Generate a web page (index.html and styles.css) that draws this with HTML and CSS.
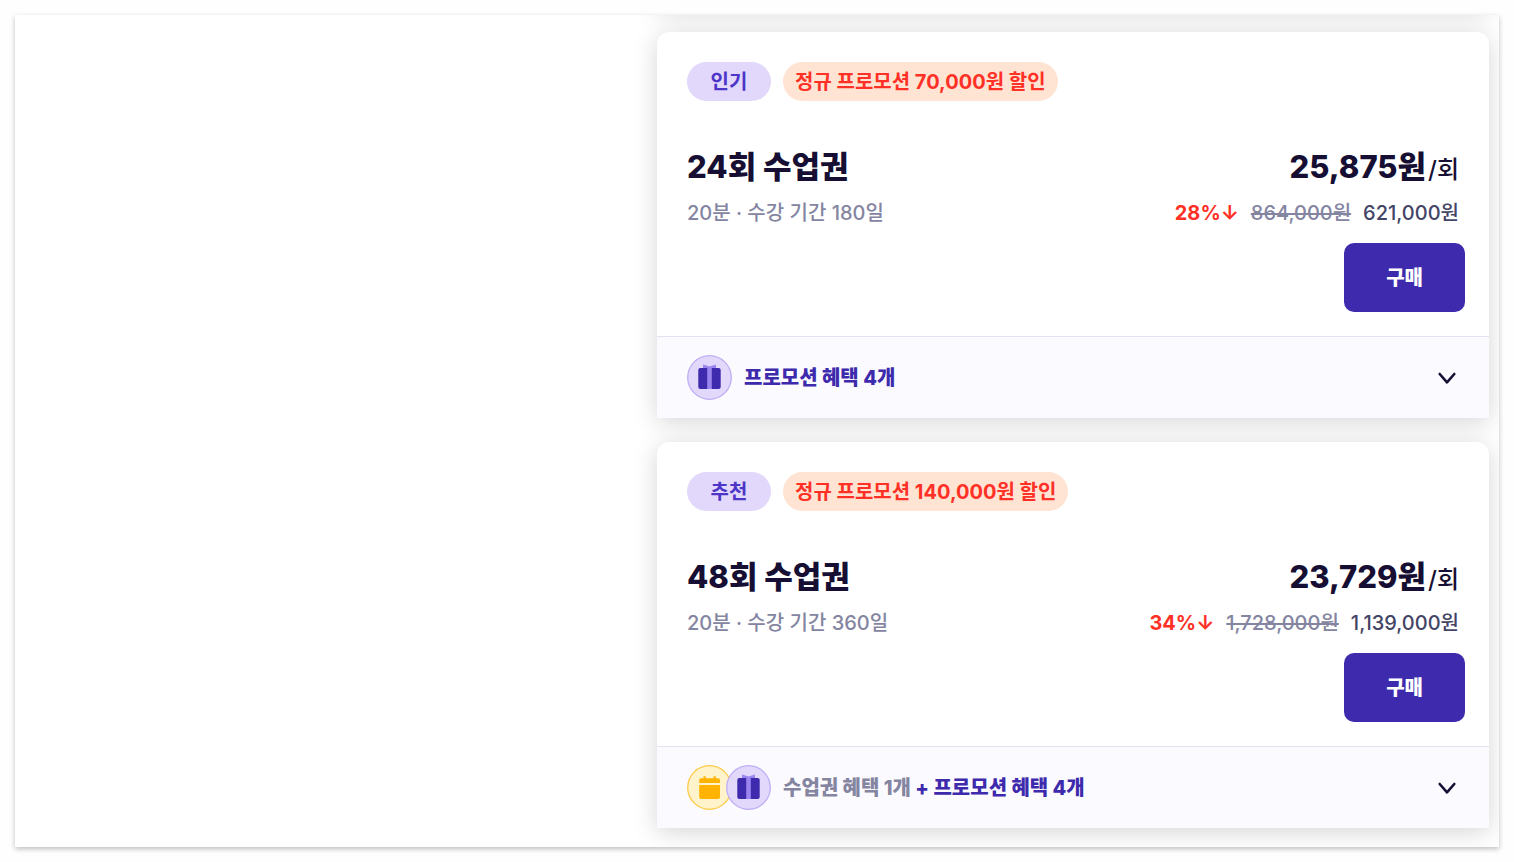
FILE: index.html
```html
<!DOCTYPE html>
<html lang="ko">
<head>
    <meta charset="UTF-8">
    <meta name="viewport" content="width=device-width, initial-scale=1.0">
    <title>수업권 구매</title>
    <link rel="stylesheet" href="styles.css">
</head>
<body>
    <!-- Shared icons -->
    <svg class="sprite" aria-hidden="true">
        <symbol id="icon-gift" viewBox="0 0 45 45">
            <circle cx="22.5" cy="22.5" r="21.8" fill="#e1d8fb" stroke="#beaef6" stroke-width="1.3"/>
            <path d="M16 9.6l6.5 1.8 6.5-1.8v4H16z" fill="#9b85ee"/>
            <rect x="11.3" y="13" width="22.4" height="21" rx="2" fill="#3d2aac"/>
            <path d="M20.2 13h4.6v21h-4.6z" fill="#9b85ee"/>
        </symbol>
        <symbol id="icon-calendar" viewBox="0 0 45 45">
            <circle cx="22.5" cy="22.5" r="21.8" fill="#fff3cc" stroke="#ffca45" stroke-width="1.3"/>
            <path d="M12.2 18v-2.8a2 2 0 0 1 2-2h2.3v-2h2.2v2h7.8v-2h2.2v2H31a2 2 0 0 1 2 2V18z" fill="#ffb300"/>
            <path d="M12.2 20H33v12a2 2 0 0 1-2 2H14.2a2 2 0 0 1-2-2z" fill="#ffb300"/>
        </symbol>
        <symbol id="icon-chevron" viewBox="0 0 24 24">
            <path d="M4.7 8l7.3 8.3L19.3 8" fill="none" stroke="#160f33" stroke-width="2.6" stroke-linecap="round" stroke-linejoin="round"/>
        </symbol>
    </svg>

    <main class="panel">
        <section class="tickets">
            <article class="ticket">
                <div class="ticket-body">
                    <div class="badges">
                        <span class="badge">인기</span>
                        <span class="badge promo">정규 프로모션 70,000원 할인</span>
                    </div>
                    <div class="info">
                        <h2>24회 수업권</h2>
                        <p class="unit-price"><strong>25,875원</strong><span>/회</span></p>
                    </div>
                    <div class="info details">
                        <p>20분 · 수강 기간 180일</p>
                        <p class="prices"><strong>28%↓</strong><del>864,000원</del><span>621,000원</span></p>
                    </div>
                    <button class="buy" type="button">구매</button>
                </div>
                <button class="benefits" type="button" aria-expanded="false">
                    <span class="icons">
                        <svg><use href="#icon-gift"/></svg>
                    </span>
                    <span class="label">프로모션 혜택 4개</span>
                    <svg class="chevron"><use href="#icon-chevron"/></svg>
                </button>
            </article>

            <article class="ticket">
                <div class="ticket-body">
                    <div class="badges">
                        <span class="badge">추천</span>
                        <span class="badge promo">정규 프로모션 140,000원 할인</span>
                    </div>
                    <div class="info">
                        <h2>48회 수업권</h2>
                        <p class="unit-price"><strong>23,729원</strong><span>/회</span></p>
                    </div>
                    <div class="info details">
                        <p>20분 · 수강 기간 360일</p>
                        <p class="prices"><strong>34%↓</strong><del>1,728,000원</del><span>1,139,000원</span></p>
                    </div>
                    <button class="buy" type="button">구매</button>
                </div>
                <button class="benefits" type="button" aria-expanded="false">
                    <span class="icons">
                        <svg><use href="#icon-calendar"/></svg>
                        <svg><use href="#icon-gift"/></svg>
                    </span>
                    <span class="label"><span class="muted">수업권 혜택 1개</span> + 프로모션 혜택 4개</span>
                    <svg class="chevron"><use href="#icon-chevron"/></svg>
                </button>
            </article>
        </section>
    </main>
</body>
</html>
```
FILE: styles.css
```css
* {
    box-sizing: border-box;
}
body {
    margin: 0;
    padding: 15px;
    background-color: #fefefe;
    font-family: Inter, "Noto Sans CJK KR", sans-serif;
    font-size: 20px;
    line-height: 30px;
    color: #160f33;
}
h2, p {
    margin: 0;
}
button {
    border: none;
    font: inherit;
    cursor: pointer;
}
.sprite {
    display: none;
}
.panel {
    display: grid;
    grid-template-columns: 642fr 832fr;
    padding: 17px 10px 19px 0;
    background-color: white;
    box-shadow: 0 2px 5px rgba(0,0,0,0.25);
    overflow: hidden;
}
.tickets {
    grid-column: 2;
    display: flex;
    flex-direction: column;
    gap: 24px;
}
/* Shadow of the card scrolled out above the list */
.tickets::before {
    content: "";
    height: 100px;
    margin-top: -124px;
    box-shadow: 0 4px 24px rgba(0,0,0,0.17);
}
.ticket {
    border-radius: 12px 12px 0 0;
    background-color: white;
    box-shadow: 0 4px 24px rgba(0,0,0,0.17);
}
.ticket-body {
    display: flex;
    flex-direction: column;
    padding: 30px 24px 24px 30px;
}
.badges {
    display: flex;
    gap: 12px;
    margin-bottom: 43px;
}
.badge {
    min-width: 84px;
    padding: 1px 12px 0;
    border-radius: 20px;
    background-color: #e1d8fb;
    color: #4d35c8;
    font-weight: 700;
    line-height: 38px;
    text-align: center;
}
.badge.promo {
    background-color: #ffe4d4;
    color: #ff3126;
}
.info {
    display: flex;
    justify-content: space-between;
    height: 46px;
    padding-right: 6px;
    line-height: 46px;
}
.info h2 {
    font-size: 31px;
    font-weight: 800;
}
.unit-price {
    display: flex;
    align-items: baseline;
    gap: 2px;
    font-size: 24px;
    font-weight: 500;
}
.unit-price strong {
    font-size: 31px;
    font-weight: 800;
}
.info.details {
    height: 30px;
    margin: 8px 0 15px;
    color: #8485a1;
    font-weight: 500;
    line-height: 30px;
}
.prices {
    display: flex;
    gap: 12px;
}
.prices strong {
    color: #ff3126;
}
.prices span {
    color: #434566;
}
.buy {
    align-self: flex-end;
    padding: 1px 42px 0;
    border-radius: 10px;
    background-color: #3d2aac;
    color: white;
    font-weight: 800;
    line-height: 68px;
}
.benefits {
    display: flex;
    align-items: center;
    gap: 12px;
    width: 100%;
    padding: 18px 30px;
    border-top: 1px solid #e4e2f1;
    background-color: #fbfaff;
    color: #3d2aac;
    font-weight: 800;
    text-align: left;
}
.icons {
    display: flex;
}
.icons svg {
    width: 45px;
    height: 45px;
}
.icons svg + svg {
    margin-left: -6px;
}
.muted {
    color: #8485a1;
}
.chevron {
    width: 24px;
    height: 24px;
    margin-left: auto;
}
```
